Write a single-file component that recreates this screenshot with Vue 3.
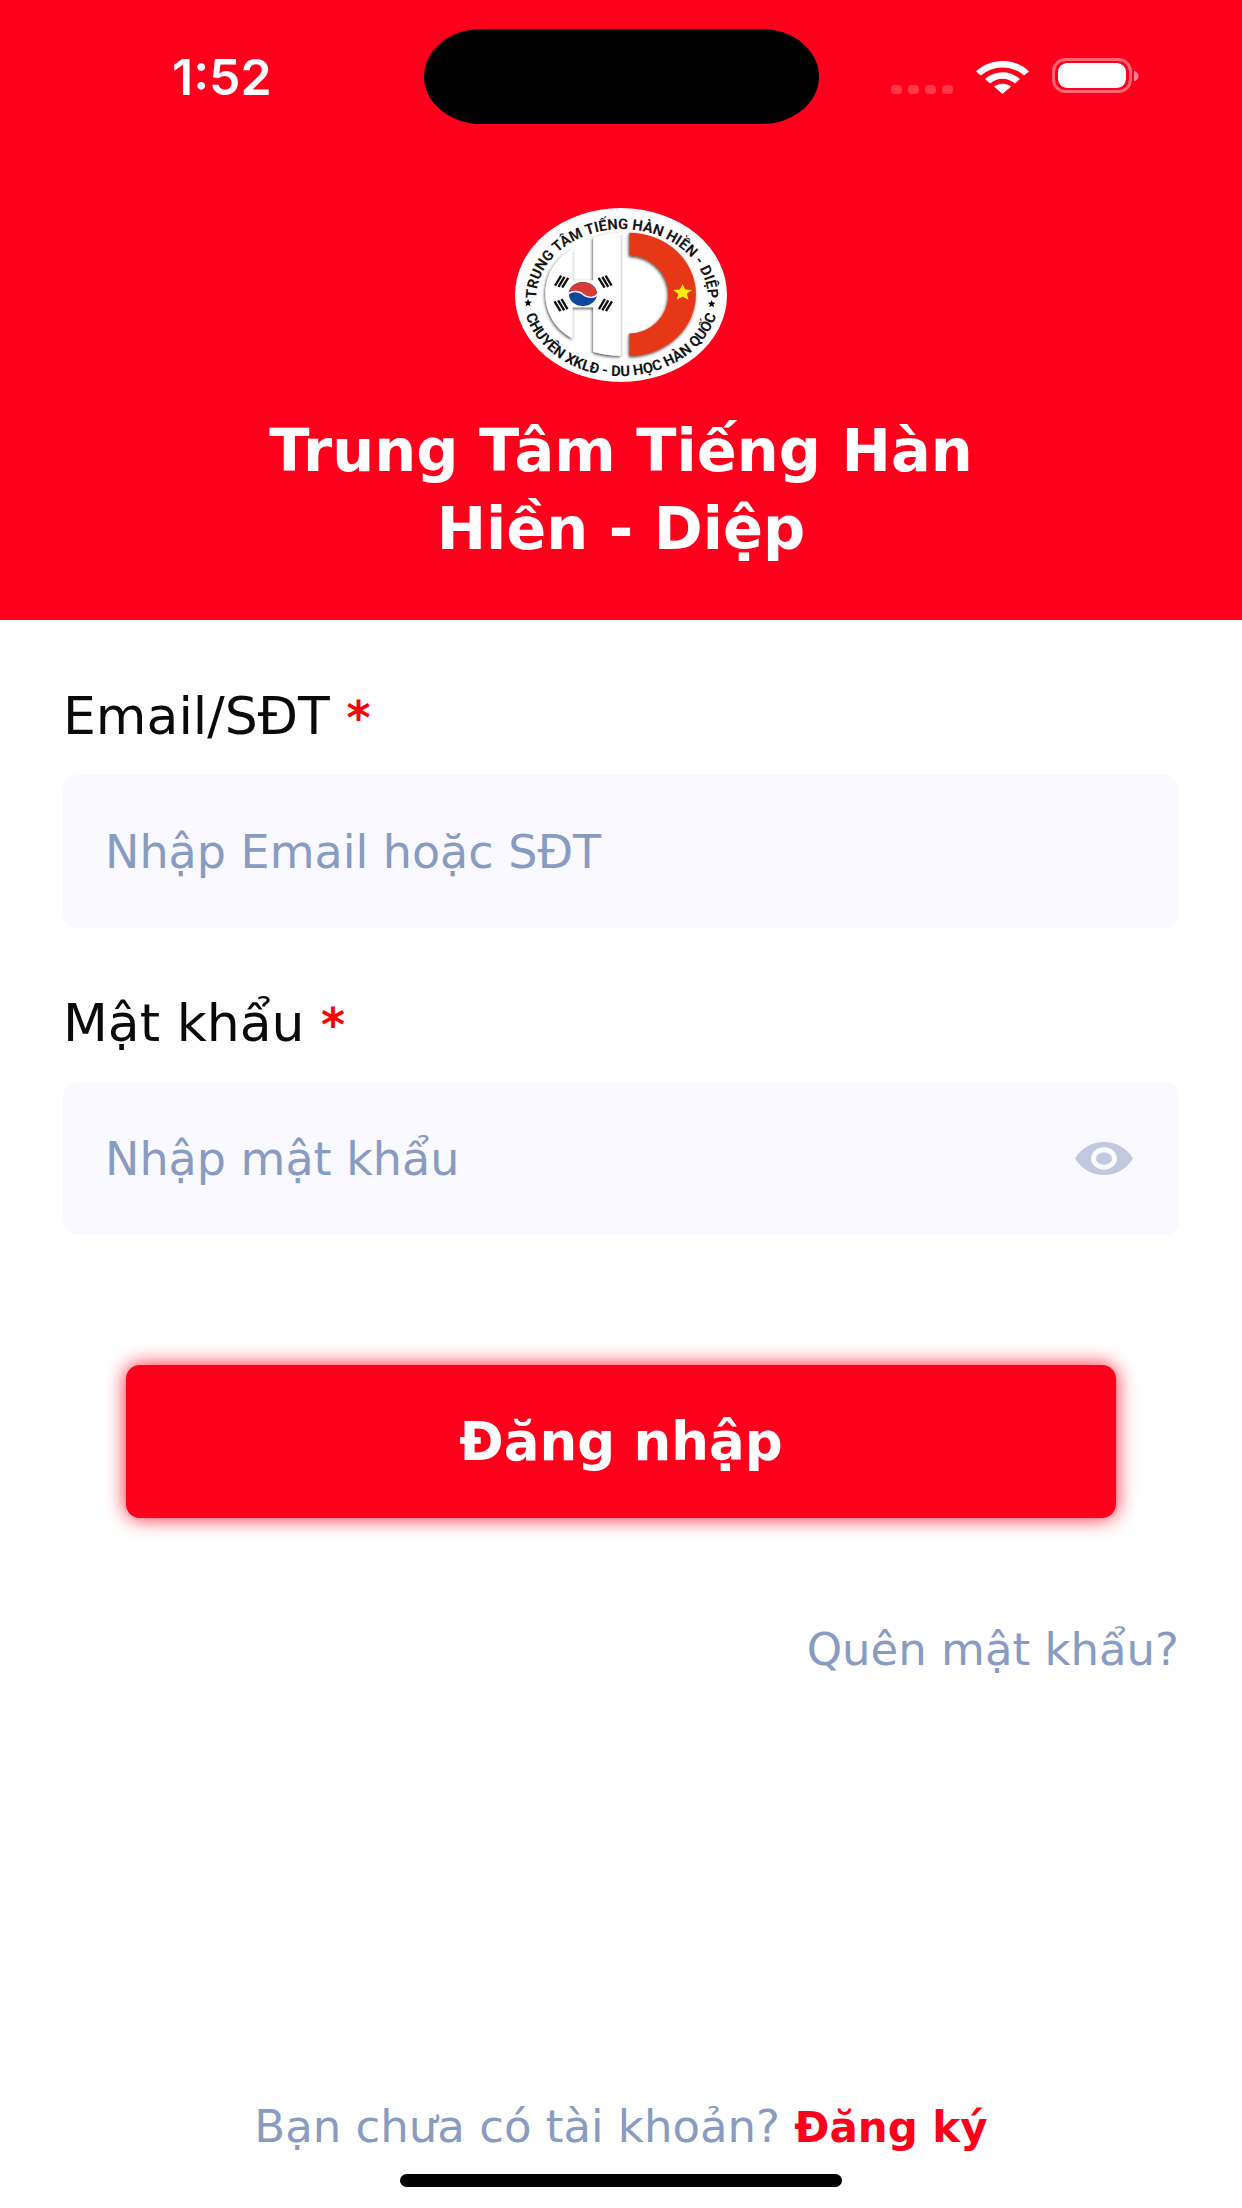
<template>
  <div class="login">
    <header class="login__header">
      <div class="status-bar">
        <span class="status-bar__time">1:52</span>
        <div class="status-bar__island"></div>
        <div class="status-bar__icons">
          <svg class="status-bar__dots" viewBox="0 0 62 9" aria-hidden="true">
            <rect v-for="n in 4" :key="n" :x="(n - 1) * 17" width="11" height="9" rx="4" />
          </svg>
          <svg class="status-bar__wifi" viewBox="0 0 53 33" aria-hidden="true">
            <path d="M0 10.500C14 -3.500 39 -3.500 53 10.500L48 14.500C36 3.800 17 3.800 5 14.500Z" />
            <path d="M9 18C19 9 34 9 44 18L39 22.500C31.500 16 21.500 16 14 22.500Z" />
            <path d="M18 25.500C23 21.800 30 21.800 35 25.500L26.500 33Z" />
          </svg>
          <svg class="status-bar__battery" viewBox="0 0 88 36" aria-hidden="true">
            <rect x="1.500" y="1.500" width="77" height="32" rx="12" class="battery-frame" />
            <rect x="6" y="5" width="68" height="25" rx="9" />
            <path d="M82 12.500C88 14.500 88 21.500 82 23.500Z" class="battery-cap" />
          </svg>
        </div>
      </div>

      <svg class="login__logo" viewBox="46 40 634 520" role="img" aria-label="Logo trung tâm">
        <defs>
          <path id="logo-arc-top" d="M109 312A257 209 0 0 1 623 312" />
          <path id="logo-arc-bottom" d="M76 355A295 244 0 0 0 650 355" />
          <filter id="logo-shadow" x="-20%" y="-20%" width="140%" height="140%">
            <feDropShadow dx="-2" dy="4" stdDeviation="4" flood-color="#000" flood-opacity="0.75" />
          </filter>
        </defs>
        <ellipse cx="363" cy="300" rx="317" ry="260" fill="#fff" />
        <text class="logo-text">
          <textPath href="#logo-arc-top" startOffset="50%">TRUNG TÂM TIẾNG HÀN HIỀN - DIỆP</textPath>
        </text>
        <text class="logo-text">
          <textPath href="#logo-arc-bottom" startOffset="50%">CHUYÊN XKLĐ - DU HỌC HÀN QUỐC</textPath>
        </text>
        <polygon :points="starPoints(85, 324, 12, 12)" />
        <polygon :points="starPoints(634, 327, 12, 12)" />

        <path
          d="M218 163V257H280V129Q318 115 362 114V482Q318 482 280 470V337H218V430C110 375 110 218 218 163Z"
          fill="#fff"
          filter="url(#logo-shadow)"
        />
        <path
          d="M388 114A199 184 0 0 1 388 482V415A116 116 0 0 0 388 182Z"
          fill="#e63716"
          filter="url(#logo-shadow)"
        />
        <polygon :points="starPoints(547, 293, 30, 26)" fill="#ffee0a" />

        <ellipse cx="249" cy="297" rx="42" ry="36" fill="#0b479d" />
        <path
          d="M207 297A42 36 0 0 1 291 297C288 310 262 310 249 298C238 287 214 287 207 297Z"
          fill="#d73a38"
        />
        <path
          d="M207 297C214 287 238 287 249 298C262 310 288 310 291 297"
          fill="none"
          stroke="#fff"
          stroke-width="4"
        />
        <g v-for="(mark, i) in trigrams" :key="i" :transform="`translate(${mark.x} ${mark.y}) scale(${mark.flip} 1)`">
          <path d="M-19 13L-1 -17M-9 17L9 -13M2 19L20 -10" class="logo-trigram" />
        </g>
      </svg>

      <h1 class="login__title">Trung Tâm Tiếng Hàn<br />Hiền - Diệp</h1>
    </header>

    <main class="login__main">
      <form class="form" @submit.prevent="handleLogin">
        <div class="field">
          <label class="field__label" for="account">Email/SĐT <span class="field__required">*</span></label>
          <div class="field__box">
            <input id="account" v-model="account" class="field__input" type="text" placeholder="Nhập Email hoặc SĐT" />
          </div>
        </div>

        <div class="field">
          <label class="field__label" for="password">Mật khẩu <span class="field__required">*</span></label>
          <div class="field__box">
            <input
              id="password"
              v-model="password"
              class="field__input"
              :type="showPassword ? 'text' : 'password'"
              placeholder="Nhập mật khẩu"
            />
            <button class="field__toggle" type="button" aria-label="Hiện mật khẩu" @click="showPassword = !showPassword">
              <svg viewBox="0 0 58 33" aria-hidden="true">
                <path d="M0 16.500C13 -5.500 45 -5.500 58 16.500C45 38.500 13 38.500 0 16.500Z" fill="#c0c9df" />
                <ellipse cx="29" cy="16.500" rx="10.500" ry="8.700" fill="#c0c9df" stroke="#faf9ff" stroke-width="5" />
              </svg>
            </button>
          </div>
        </div>

        <button class="form__submit" type="submit">Đăng nhập</button>
      </form>

      <a class="login__forgot" href="#">Quên mật khẩu?</a>
    </main>

    <footer class="login__footer">
      <p class="login__register">Bạn chưa có tài khoản? <a href="#">Đăng ký</a></p>
      <div class="home-indicator"></div>
    </footer>
  </div>
</template>

<script setup>
import { ref } from 'vue';

const account = ref('');
const password = ref('');
const showPassword = ref(false);

const trigrams = [
  { x: 185, y: 259, flip: 1 },
  { x: 316, y: 259, flip: -1 },
  { x: 184, y: 329, flip: -1 },
  { x: 316, y: 329, flip: 1 }
];

const starPoints = (cx, cy, rx, ry) =>
  Array.from({ length: 10 }, (_, i) => {
    const scale = i % 2 ? 0.45 : 1;
    const angle = (i * Math.PI) / 5 - Math.PI / 2;
    return `${cx + Math.cos(angle) * rx * scale},${cy + Math.sin(angle) * ry * scale}`;
  }).join(' ');

const handleLogin = () => {
  showPassword.value = false;
};
</script>

<style>
body {
  margin: 0;
  background: #fff;
}
</style>

<style scoped>
.login {
  display: flex;
  flex-direction: column;
  min-height: 100vh;
  font-family: 'DejaVu Sans', 'Noto Sans', sans-serif;
  color: #0a0a0a;
  background: #fff;
}

.login__header {
  display: flex;
  flex-direction: column;
  align-items: center;
  padding-bottom: 52px;
  background: #ff001c;
  color: #fff;
}

.status-bar {
  display: grid;
  grid-template-columns: 1fr auto 1fr;
  align-items: center;
  box-sizing: border-box;
  width: 100%;
  padding: 29px 102px 0;
}

.status-bar__time {
  padding-left: 70px;
  font-family: Inter, sans-serif;
  font-size: 50px;
  font-weight: 600;
  line-height: 48px;
}

.status-bar__island {
  width: 395px;
  height: 95px;
  border-radius: 58px / 48px;
  background: #000;
}

.status-bar__icons {
  display: flex;
  align-items: flex-end;
  justify-content: flex-end;
  padding-bottom: 2px;
}

.status-bar__icons svg {
  fill: #fff;
}

.status-bar__dots {
  width: 62px;
  height: 9px;
  margin-right: 23px;
  opacity: 0.22;
}

.status-bar__wifi {
  width: 53px;
  height: 33px;
  margin-right: 23px;
}

.status-bar__battery {
  width: 88px;
  height: 36px;
}

.battery-frame {
  fill: none;
  stroke: #fff;
  stroke-width: 3;
  opacity: 0.4;
}

.battery-cap {
  opacity: 0.5;
}

.login__logo {
  width: 212px;
  height: 174px;
  margin-top: 84px;
}

.logo-text {
  font-family: Roboto, 'Liberation Sans', sans-serif;
  font-size: 44px;
  font-weight: 700;
  text-anchor: middle;
  fill: #151515;
}

.logo-trigram {
  fill: none;
  stroke: #111;
  stroke-width: 7;
}

.login__title {
  margin: 30px 0 0;
  font-size: 59px;
  font-weight: 700;
  line-height: 78px;
  text-align: center;
}

.login__main {
  display: flex;
  flex-direction: column;
  flex: 1;
  padding: 62px 63px 0;
}

.form {
  display: flex;
  flex-direction: column;
  gap: 61px;
}

.field {
  display: flex;
  flex-direction: column;
  gap: 25px;
}

.field__label {
  font-size: 52px;
  line-height: 68px;
}

.field__required {
  font-size: 46px;
  font-weight: 700;
  line-height: 1;
  color: #f00;
}

.field__box {
  display: flex;
  align-items: center;
  box-sizing: border-box;
  height: 153px;
  padding: 0 46px 0 42px;
  border-radius: 14px;
  background: #faf9ff;
}

.field__input {
  flex: 1;
  min-width: 0;
  height: 100%;
  padding: 0;
  border: none;
  outline: none;
  background: transparent;
  font-family: inherit;
  font-size: 46px;
  color: #0a0a0a;
}

.field__input::placeholder {
  color: #889bc1;
  opacity: 1;
}

.field__toggle {
  display: flex;
  padding: 0;
  border: none;
  background: none;
  cursor: pointer;
}

.field__toggle svg {
  width: 58px;
  height: 33px;
}

.form__submit {
  height: 153px;
  margin: 69px 63px 0;
  border: none;
  border-radius: 14px;
  background: #ff001c;
  box-shadow: 0 0 20px rgba(255, 0, 28, 0.9);
  font-family: inherit;
  font-size: 53px;
  font-weight: 700;
  color: #fff;
  cursor: pointer;
}

.login__forgot {
  align-self: flex-end;
  margin-top: 102px;
  font-size: 45px;
  line-height: 60px;
  color: #889bc1;
  text-decoration: none;
}

.login__footer {
  display: flex;
  flex-direction: column;
  align-items: center;
  padding-bottom: 21px;
}

.login__register {
  margin: 0 0 17px;
  font-size: 45px;
  line-height: 60px;
  color: #889bc1;
}

.login__register a {
  font-size: 42px;
  font-weight: 700;
  line-height: 1;
  color: #ff001c;
  text-decoration: none;
}

.home-indicator {
  width: 442px;
  height: 13px;
  border-radius: 7px;
  background: #000;
}
</style>
